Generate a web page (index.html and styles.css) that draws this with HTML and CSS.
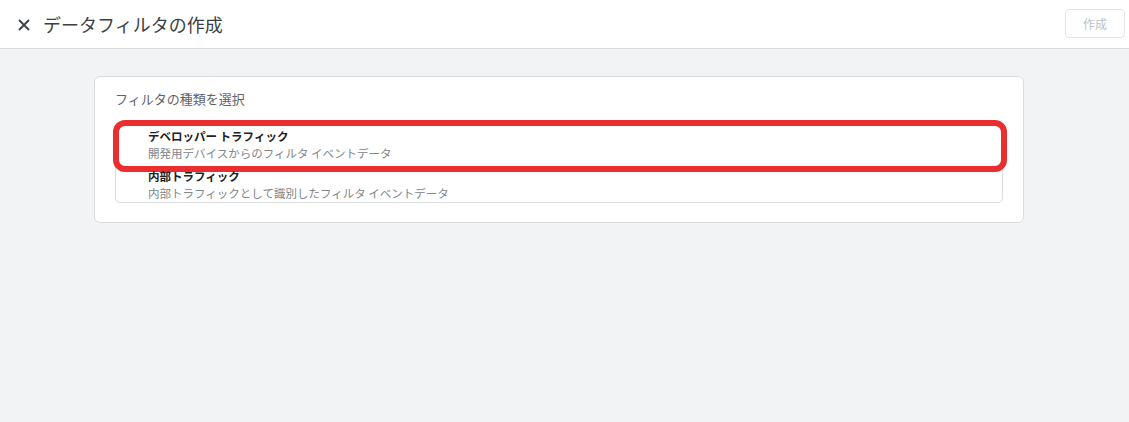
FILE: index.html
```html
<!DOCTYPE html>
<html>

    <head>
        <!-- Meta Data -->
        <meta charset="UTF-8">

        <!-- Title -->
        <title>データフィルタの作成</title>

        <!-- Style -->
        <link rel="stylesheet" href="styles.css">
    </head>

    <body>
        <!-- Header -->
        <div class="header">
            <div class="close-icon">
                <svg width="12" height="12" viewBox="0 0 12 12">
                    <path d="M1 1L11 11M11 1L1 11" stroke="#3c4043" stroke-width="1.8" fill="none"/>
                </svg>
            </div>
            <h1 class="header-title">データフィルタの作成</h1>
            <button class="create-button" disabled>作成</button>
        </div>

        <!-- Content -->
        <div class="content">
            <div class="card">
                <h2 class="card-title">フィルタの種類を選択</h2>
                <div class="filter-list">
                    <div class="filter-item first">
                        <div class="filter-name">デベロッパー トラフィック</div>
                        <div class="filter-desc">開発用デバイスからのフィルタ イベントデータ</div>
                        <div class="highlight"></div>
                    </div>
                    <div class="filter-item second">
                        <div class="filter-name">内部トラフィック</div>
                        <div class="filter-desc">内部トラフィックとして識別したフィルタ イベントデータ</div>
                    </div>
                </div>
            </div>
        </div>
    </body>

</html>
```

FILE: styles.css
```css
html {
    background-color: #f1f3f4;
}

body {
    margin: 0;
    font-family: "Noto Sans CJK JP", "Noto Sans", sans-serif;
    color: #202124;
}

.header {
    display: flex;
    align-items: center;
    height: 48px;
    background-color: #fff;
    border-bottom: 1px solid #dadce0;
    padding: 0 4px 0 18px;
}

.close-icon {
    width: 12px;
    height: 12px;
    margin-top: 1px;
}

.close-icon svg {
    display: block;
}

.header-title {
    flex: 1;
    margin: 0 0 0 13px;
    font-size: 18px;
    font-weight: normal;
    line-height: 24px;
    color: #3c4043;
}

.create-button {
    width: 60px;
    height: 29px;
    border: 1px solid #e3e5e8;
    border-radius: 4px;
    background-color: #fff;
    color: #bdc1c6;
    font-family: inherit;
    font-size: 12px;
    margin-bottom: 2px;
}

.content {
    padding: 27px 0 0 94px;
}

.card {
    width: 888px;
    background-color: #fff;
    border: 1px solid #dadce0;
    border-radius: 6px;
    padding: 12px 20px 19px 20px;
}

.card-title {
    margin: 0 0 13px 0;
    font-size: 13px;
    font-weight: normal;
    line-height: 20px;
    color: #5f6368;
}

.filter-list {
    border: 1px solid #dadce0;
    border-radius: 5px;
}

.filter-item {
    position: relative;
    padding-left: 32px;
}

.filter-item.first {
    padding-top: 5px;
    padding-bottom: 4px;
    border-bottom: 1px solid #e3e5e8;
}

.filter-item.second {
    padding-top: 1px;
}

.filter-name {
    font-size: 11.5px;
    font-weight: bold;
    line-height: 17px;
    color: #202124;
}

.filter-desc {
    font-size: 11.5px;
    line-height: 17px;
    color: #80868b;
}

.highlight {
    position: absolute;
    left: -3px;
    top: -3px;
    right: -5px;
    bottom: -6px;
    border: 6px solid #ea2d2e;
    border-radius: 12px;
}
```
